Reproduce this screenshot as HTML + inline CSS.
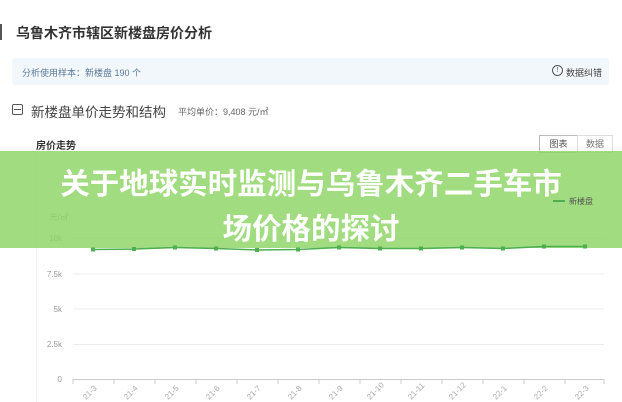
<!DOCTYPE html>
<html><head><meta charset="utf-8"><style>
body{margin:0;width:622px;height:400px;overflow:hidden;background:#fff;font-family:"Liberation Sans","Noto Sans CJK SC",sans-serif;position:relative}
.a{position:absolute;white-space:nowrap}
</style></head><body>
<div class="a" style="left:0;top:24px;width:2px;height:16px;background:#555"></div>
<div class="a" style="left:16px;top:23px;font-size:14px;font-weight:bold;color:#333">乌鲁木齐市辖区新楼盘房价分析</div>
<div class="a" style="left:12px;top:58px;width:597px;height:27px;background:#f2f7fc;border-radius:3px"></div>
<div class="a" style="left:22px;top:66px;font-size:9px;color:#5a7a9a">分析使用样本：新楼盘 190 个</div>
<div class="a" style="left:552px;top:65px;width:9px;height:9px;border:1px solid #555;border-radius:50%;font-size:7px;line-height:9px;text-align:center;color:#555">!</div>
<div class="a" style="left:566px;top:66px;font-size:9px;color:#444">数据纠错</div>
<div class="a" style="left:12px;top:104px;width:9px;height:9px;border:1px solid #555;border-radius:2px"></div>
<div class="a" style="left:14px;top:109px;width:7px;height:1px;background:#555"></div>
<div class="a" style="left:31px;top:101px;font-size:13.5px;color:#444">新楼盘单价走势和结构</div>
<div class="a" style="left:178px;top:105px;font-size:9px;color:#666">平均单价：9,408 元/㎡</div>
<div class="a" style="left:36px;top:137px;font-size:10px;font-weight:bold;color:#333">房价走势</div>
<div class="a" style="left:539px;top:135px;width:37px;height:16px;border:1px solid #bbb;background:#fff;font-size:9px;line-height:16px;text-align:center;color:#555">图表</div>
<div class="a" style="left:577px;top:135px;width:34px;height:16px;border:1px solid #ddd;font-size:9px;line-height:16px;text-align:center;color:#777">数据</div>
<div class="a" style="left:36px;top:152px;width:574px;height:250px;border-left:1px solid #eee"></div>
<svg class="a" style="left:0;top:0" width="622" height="400">
<g stroke="#ececec" stroke-width="1"><line x1="73" y1="238" x2="604" y2="238"/><line x1="73" y1="274" x2="604" y2="274"/><line x1="73" y1="309" x2="604" y2="309"/><line x1="73" y1="344.5" x2="604" y2="344.5"/></g>
<line x1="73" y1="379.5" x2="604" y2="379.5" stroke="#ccc"/>
<g stroke="#ccc"><line x1="73" y1="379" x2="73" y2="384"/><line x1="114" y1="379" x2="114" y2="384"/><line x1="155" y1="379" x2="155" y2="384"/><line x1="196" y1="379" x2="196" y2="384"/><line x1="237" y1="379" x2="237" y2="384"/><line x1="278" y1="379" x2="278" y2="384"/><line x1="319" y1="379" x2="319" y2="384"/><line x1="360" y1="379" x2="360" y2="384"/><line x1="401" y1="379" x2="401" y2="384"/><line x1="442" y1="379" x2="442" y2="384"/><line x1="483" y1="379" x2="483" y2="384"/><line x1="524" y1="379" x2="524" y2="384"/><line x1="565" y1="379" x2="565" y2="384"/><line x1="604" y1="379" x2="604" y2="384"/></g>
<g fill="#999" font-size="8" font-family="Liberation Sans" text-anchor="end"><text x="62" y="241">10k</text><text x="62" y="277">7.5k</text><text x="62" y="312">5k</text><text x="62" y="347">2.5k</text><text x="62" y="382">0</text><text x="68" y="220" font-family="Liberation Sans,Noto Sans CJK SC">元/㎡</text></g>
<g fill="#aaa" font-size="8" font-family="Liberation Sans">
<text transform="translate(86,400) rotate(-45)">21-3</text><text transform="translate(127,400) rotate(-45)">21-4</text><text transform="translate(168,400) rotate(-45)">21-5</text><text transform="translate(209,400) rotate(-45)">21-6</text><text transform="translate(250,400) rotate(-45)">21-7</text><text transform="translate(291,400) rotate(-45)">21-8</text><text transform="translate(332,400) rotate(-45)">21-9</text><text transform="translate(370,400) rotate(-45)">21-10</text><text transform="translate(411,400) rotate(-45)">21-11</text><text transform="translate(452,400) rotate(-45)">21-12</text><text transform="translate(496,400) rotate(-45)">22-1</text><text transform="translate(537,400) rotate(-45)">22-2</text><text transform="translate(578,400) rotate(-45)">22-3</text></g>
</svg>
<div class="a" style="left:0;top:151px;width:622px;height:97px;background:rgba(140,212,100,0.82)"></div>
<svg class="a" style="left:0;top:0" width="622" height="400">
<polyline fill="none" stroke="#4caf50" stroke-width="1.5" points="93,249.5 134,249 175,247.5 216,248.5 257,250 298,249.5 339,247.5 380,248.5 421,248.5 462,247.5 503,248.5 544,246.5 585,246.5"/>
<g fill="#4caf50"><rect x="91" y="247.5" width="4" height="4"/><rect x="132" y="247" width="4" height="4"/><rect x="173" y="245.5" width="4" height="4"/><rect x="214" y="246.5" width="4" height="4"/><rect x="255" y="248" width="4" height="4"/><rect x="296" y="247.5" width="4" height="4"/><rect x="337" y="245.5" width="4" height="4"/><rect x="378" y="246.5" width="4" height="4"/><rect x="419" y="246.5" width="4" height="4"/><rect x="460" y="245.5" width="4" height="4"/><rect x="501" y="246.5" width="4" height="4"/><rect x="542" y="244.5" width="4" height="4"/><rect x="583" y="244.5" width="4" height="4"/></g>
</svg>
<div class="a" style="left:553px;top:200px;width:12px;height:2px;background:#4caf50"></div>
<div class="a" style="left:569px;top:196px;font-size:8px;color:#555">新楼盘</div>
<div class="a" style="left:0;top:162px;width:622px;text-align:center;font-size:29.5px;font-weight:bold;color:#fff;line-height:45px;white-space:normal">关于地球实时监测与乌鲁木齐二手车市<br>场价格的探讨</div>
</body></html>
